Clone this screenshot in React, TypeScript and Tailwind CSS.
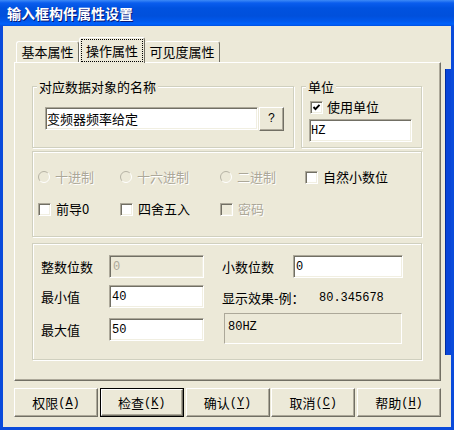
import React from "react";

const cjk = "font-['Noto_Sans_CJK_SC',sans-serif]";
const mono = "font-['Liberation_Mono',monospace]";
const grayText = "text-[#ACA899] [text-shadow:1px_1px_0_#fff]";

function Edit({
  className,
  children,
  disabled,
}: {
  className: string;
  children?: React.ReactNode;
  disabled?: boolean;
}) {
  return (
    <div
      className={`h-[23px] shrink-0 flex items-center pl-[1px] border border-t-[#ACA899] border-l-[#ACA899] border-r-white border-b-white shadow-[inset_1px_1px_0_#716F64,inset_-1px_-1px_0_#F1EFE2] ${
        disabled ? "bg-[#ECE9D8] text-[#ACA899]" : "bg-white"
      } ${className}`}
    >
      {children}
    </div>
  );
}

function CheckBox({ checked, disabled }: { checked?: boolean; disabled?: boolean }) {
  return (
    <span
      className={`w-[13px] h-[13px] shrink-0 flex items-center justify-center border border-t-[#ACA899] border-l-[#ACA899] border-r-white border-b-white shadow-[inset_1px_1px_0_#716F64,inset_-1px_-1px_0_#F1EFE2] ${
        disabled ? "bg-[#ECE9D8]" : "bg-white"
      }`}
    >
      {checked && (
        <svg width="9" height="9" viewBox="0 0 9 9">
          <polyline points="1.5,4 3.5,6.2 7.5,1.8" fill="none" stroke="#000" strokeWidth="1.9" />
        </svg>
      )}
    </span>
  );
}

function Radio({ label }: { label: string }) {
  return (
    <div className="flex items-center gap-[5px] h-[14px]">
      <svg width="12" height="12" viewBox="0 0 12 12" className="shrink-0">
        <circle cx="6" cy="6" r="5.5" fill="#ECE9D8" />
        <path d="M2.11 9.89 A5.5 5.5 0 0 1 9.89 2.11" fill="none" stroke="#B5B2A4" strokeWidth="1" />
        <path d="M9.89 2.11 A5.5 5.5 0 0 1 2.11 9.89" fill="none" stroke="#FFFFFF" strokeWidth="1" />
      </svg>
      <span className={grayText}>{label}</span>
    </div>
  );
}

function CheckItem({ label, disabled }: { label: string; disabled?: boolean }) {
  return (
    <div className="flex items-center gap-[5px] h-[14px]">
      <CheckBox disabled={disabled} />
      <span className={disabled ? grayText : ""}>{label}</span>
    </div>
  );
}

function Group({
  legend,
  className,
  children,
}: {
  legend?: string;
  className: string;
  children: React.ReactNode;
}) {
  return (
    <div
      className={`relative shrink-0 border border-[#D0D0BF] shadow-[inset_1px_1px_0_#fff,1px_1px_0_#fff] ${className}`}
    >
      {legend && (
        <span className="absolute -top-[7px] left-[4px] px-[2px] bg-[#ECE9D8] leading-[14px]">
          {legend}
        </span>
      )}
      {children}
    </div>
  );
}

function Button({ label, hot, isDefault }: { label: string; hot: string; isDefault?: boolean }) {
  return (
    <div className={`w-[84px] h-[29px] flex ${isDefault ? "border border-black" : ""}`}>
      <div className="flex-1 flex items-center justify-center border border-t-white border-l-white border-r-[#716F64] border-b-[#716F64] shadow-[inset_-1px_-1px_0_#ACA899]">
        <span>{label}</span>
        <span className={`${mono} text-[12px]`}>
          (<span className="underline underline-offset-2">{hot}</span>)
        </span>
      </div>
    </div>
  );
}

export default function App() {
  return (
    <div
      className={`w-[454px] h-[430px] flex flex-col overflow-hidden text-[13px] leading-[14px] text-black ${cjk}`}
    >
      {/* title bar */}
      <div className="h-[26px] shrink-0 flex items-center pl-[7px] bg-[linear-gradient(to_bottom,#3D8AF7_0px,#0A5DEE_3px,#0052E0_8px,#0050DC_16px,#0058EC_21px,#0062FC_24px,#0050E0_26px)]">
        <span className="font-bold text-[14px] text-white [text-shadow:1px_1px_0_#0A1874]">
          输入框构件属性设置
        </span>
      </div>

      <div className="flex h-[401px]">
        <div className="w-[3px] bg-[#0A4BDB]" />

        <div className="w-[442px] bg-[#ECE9D8] pl-[11px] pr-[4px] pt-[11px] flex flex-col">
          {/* tabs */}
          <div className="h-[25px] flex items-end pl-[2px] relative z-10">
            <div className="w-[63px] h-[21px] flex items-center justify-center border-t border-l border-white border-r border-r-[#716F64] rounded-t-[3px]">
              基本属性
            </div>
            <div className="w-[66px] h-[26px] -mb-px flex flex-col border-t border-l border-white border-r border-r-[#716F64] rounded-t-[3px] bg-[#ECE9D8] pt-px px-px">
              <div className="flex-1 mb-px flex items-center justify-center border border-dotted border-black">
                操作属性
              </div>
            </div>
            <div className="w-[75px] h-[21px] flex items-center justify-center border-t border-white border-r border-r-[#716F64] rounded-t-[3px]">
              可见度属性
            </div>
          </div>

          {/* panel */}
          <div className="w-[427px] h-[319px] shrink-0 flex flex-col border border-t-white border-l-white border-r-[#716F64] border-b-[#716F64] shadow-[inset_-1px_-1px_0_#ACA899] pt-[23px] pl-[17px] pr-[18px]">
            <div className="flex gap-[7px]">
              <Group legend="对应数据对象的名称" className="w-[262px] h-[62px] pt-[20px] pl-[12px]">
                <div className="flex items-start">
                  <Edit className="w-[213px]">变频器频率给定</Edit>
                  <div className="ml-px w-[25px] h-[24px] flex items-center justify-center border border-t-white border-l-white border-r-[#716F64] border-b-[#716F64] shadow-[inset_-1px_-1px_0_#ACA899]">
                    <span className={`${mono} text-[12px]`}>?</span>
                  </div>
                </div>
              </Group>
              <Group legend="单位" className="w-[121px] h-[62px] pt-[13px] pl-[7px]">
                <div className="flex items-center gap-[4px] h-[14px] ml-px">
                  <CheckBox checked />
                  <span>使用单位</span>
                </div>
                <Edit className="w-[103px] mt-[5px]">
                  <span className={`${mono} text-[12px]`}>HZ</span>
                </Edit>
              </Group>
            </div>

            <Group className="w-full h-[86px] mt-[3px] pt-[18px] pl-[5px]">
              <div className="grid grid-cols-[82px_100px_85px_auto] gap-y-[18px]">
                <Radio label="十进制" />
                <Radio label="十六进制" />
                <Radio label="二进制" />
                <CheckItem label="自然小数位" />
                <CheckItem label="前导0" />
                <CheckItem label="四舍五入" />
                <CheckItem label="密码" disabled />
              </div>
            </Group>

            <Group className="w-full h-[117px] mt-[6px] pt-[11px] pl-[8px] flex">
              <div className="flex flex-col">
                <div className="flex items-center">
                  <span className="w-[68px]">整数位数</span>
                  <Edit className="w-[95px]" disabled>
                    <span className={`${mono} text-[12px] ml-[2px]`}>0</span>
                  </Edit>
                </div>
                <div className="flex items-center mt-[7px]">
                  <span className="w-[68px]">最小值</span>
                  <Edit className="w-[95px]">
                    <span className={`${mono} text-[12px] ml-[1px]`}>40</span>
                  </Edit>
                </div>
                <div className="flex items-center mt-[10px]">
                  <span className="w-[68px]">最大值</span>
                  <Edit className="w-[95px]">
                    <span className={`${mono} text-[12px] ml-[1px]`}>50</span>
                  </Edit>
                </div>
              </div>

              <div className="flex flex-col ml-[18px]">
                <div className="flex items-center">
                  <span className="w-[71px]">小数位数</span>
                  <Edit className="w-[110px]">
                    <span className={`${mono} text-[12px] ml-[1px]`}>0</span>
                  </Edit>
                </div>
                <div className="flex items-center h-[14px] mt-[13px]">
                  <span className="w-[97px]">显示效果-例：</span>
                  <span className={`${mono} text-[12px]`}>80.345678</span>
                </div>
                <div className="ml-[2px] mt-[8px] w-[178px] h-[31px] border border-t-[#ACA899] border-l-[#ACA899] border-r-white border-b-white pl-[3px] pt-[4px]">
                  <span className={`${mono} text-[12px]`}>80HZ</span>
                </div>
              </div>
            </Group>
          </div>

          {/* buttons */}
          <div className="mt-[7px] flex justify-between">
            <Button label="权限" hot="A" />
            <Button label="检查" hot="K" isDefault />
            <Button label="确认" hot="Y" />
            <Button label="取消" hot="C" />
            <Button label="帮助" hot="H" />
          </div>
        </div>

        <div className="w-[6px] flex flex-col bg-[#ECE9D8]">
          <div className="h-[43px]" />
          <div className="h-[286px] bg-[#0A46D8] border-l border-[#002C9E]" />
        </div>

        <div className="w-[3px] bg-[#0A4BDB]" />
      </div>

      <div className="h-[3px] shrink-0 bg-[#0A4BDB]" />
    </div>
  );
}
